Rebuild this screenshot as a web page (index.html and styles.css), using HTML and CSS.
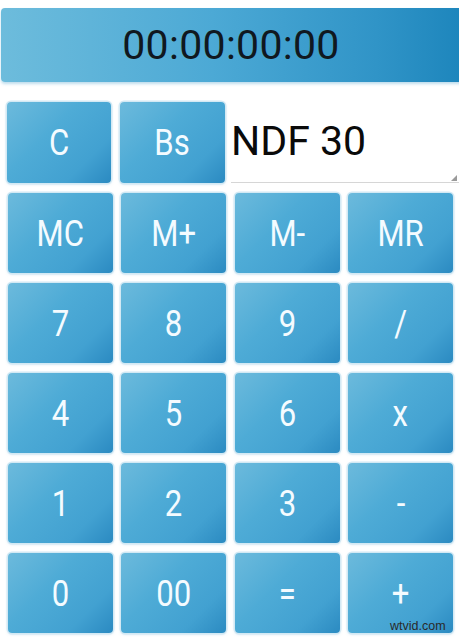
FILE: index.html
```html
<!DOCTYPE html>
<html>
<head>
<meta charset="utf-8">
<link rel="stylesheet" href="styles.css">
</head>
<body>
<div class="screen">
  <div class="timer">00:00:00:00</div>
  <div class="toprow">
    <div class="btn btn-c"><span>C</span></div>
    <div class="btn btn-bs"><span>Bs</span></div>
    <div class="field">NDF 30<i class="corner"></i></div>
  </div>
  <div class="pad">
    <div class="btn"><span>MC</span></div>
    <div class="btn"><span>M+</span></div>
    <div class="btn"><span>M-</span></div>
    <div class="btn"><span>MR</span></div>
    <div class="btn"><span>7</span></div>
    <div class="btn"><span>8</span></div>
    <div class="btn"><span>9</span></div>
    <div class="btn"><span>/</span></div>
    <div class="btn"><span>4</span></div>
    <div class="btn"><span>5</span></div>
    <div class="btn"><span>6</span></div>
    <div class="btn"><span>x</span></div>
    <div class="btn"><span>1</span></div>
    <div class="btn"><span>2</span></div>
    <div class="btn"><span>3</span></div>
    <div class="btn"><span>-</span></div>
    <div class="btn"><span>0</span></div>
    <div class="btn"><span>00</span></div>
    <div class="btn"><span>=</span></div>
    <div class="btn"><span>+</span></div>
  </div>
  <div class="watermark">wtvid.com</div>
</div>
</body>
</html>
```
FILE: styles.css
```css
html, body {
  margin: 0;
  padding: 0;
  background: #ffffff;
}
body {
  width: 459px;
  height: 639px;
  overflow: hidden;
  font-family: Roboto, "Open Sans", sans-serif;
}
.screen {
  position: relative;
  width: 459px;
  height: 639px;
  padding-top: 8px;
  box-sizing: border-box;
}
.timer {
  margin-left: 1px;
  width: 470px;
  height: 74px;
  border-radius: 4px 0 0 4px;
  background: linear-gradient(90deg, #6dbcdc 0%, #4ca9d5 45%, #3094c7 80%, #1b84bb 100%);
  box-shadow: 0 2px 3px rgba(110, 180, 215, 0.45);
  display: flex;
  align-items: center;
  justify-content: center;
  color: #101820;
  font-size: 41px;
  padding-right: 10px;
  box-sizing: border-box;
  letter-spacing: 0.3px;
}
.toprow {
  display: flex;
  margin-top: 20px;
  padding-left: 7px;
  height: 81px;
}
.btn {
  background: linear-gradient(135deg, #6cbadc 0%, #4eabd6 40%, #42a1d1 75%, #2b8ac1 100%);
  border-radius: 4px;
  box-shadow: 0 0 0 1.5px #d3e9f4, 0 1px 3px rgba(120, 180, 215, 0.5);
  display: flex;
  align-items: center;
  justify-content: center;
  color: #f4fbff;
  font-size: 37px;
}
.btn span {
  display: inline-block;
  transform: scaleX(0.84);
}
.btn-c {
  width: 104px;
}
.btn-bs {
  width: 105px;
  margin-left: 9px;
}
.field {
  position: relative;
  flex: 1;
  margin-left: 6px;
  border-bottom: 1px solid #d6d6d6;
  display: flex;
  align-items: center;
  color: #0a0a0a;
  font-size: 41px;
  padding-bottom: 2px;
  box-sizing: border-box;
}
.corner {
  position: absolute;
  right: 2px;
  bottom: 1px;
  width: 0;
  height: 0;
  border-left: 6px solid transparent;
  border-bottom: 6px solid #9a9a9a;
}
.pad {
  margin-top: 10px;
  padding-left: 8px;
  display: grid;
  grid-template-columns: repeat(4, 105px);
  grid-auto-rows: 80px;
  column-gap: 8.4px;
  row-gap: 10px;
}
.watermark {
  position: absolute;
  left: 390px;
  top: 619px;
  font-family: "Liberation Sans", Arial, sans-serif;
  font-size: 12.5px;
  color: #2a2a2a;
}
```
